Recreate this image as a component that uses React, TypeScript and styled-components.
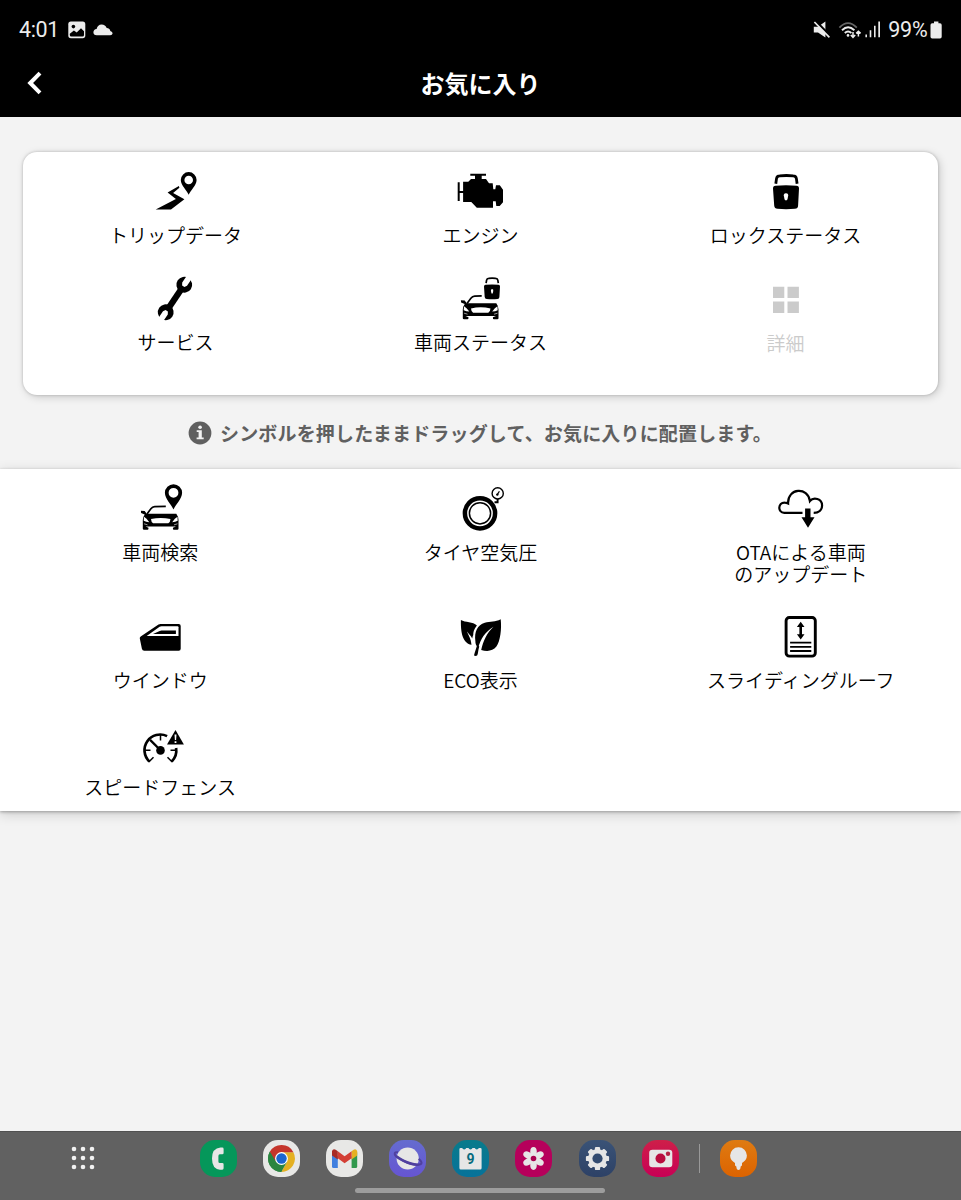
import React from 'react';
import styled, { createGlobalStyle } from 'styled-components';

const GlobalStyle = createGlobalStyle`
  *, *::before, *::after { box-sizing: border-box; }
  body {
    margin: 0;
    background: #f3f3f3;
    font-family: "Noto Sans CJK JP", "Noto Sans", sans-serif;
  }
`;

const Screen = styled.div`
  width: 100%;
  height: 1200px;
  display: flex;
  flex-direction: column;
  background: #f3f3f3;
  overflow: hidden;
`;

const Header = styled.header`
  height: 117px;
  flex: none;
  background: #000;
`;

const StatusBar = styled.div`
  height: 58px;
  padding: 1px 19px 0 19px;
  display: flex;
  align-items: center;
  justify-content: space-between;
  color: #ececec;
  font: 400 21.5px/26px Roboto, sans-serif;
`;

const StatusGroup = styled.div<{ $gap: number }>`
  display: flex;
  align-items: center;
  gap: ${({ $gap }) => $gap}px;
`;

const Clock = styled.span`
  width: 42px;
  padding-top: 1px;
  letter-spacing: -0.4px;
`;

const Percent = styled.span`
  padding-top: 1px;
  letter-spacing: -0.2px;
`;

const TitleBar = styled.div`
  height: 59px;
  padding: 0 23px;
  display: grid;
  grid-template-columns: 24px 1fr 24px;
  align-items: center;
  color: #fff;
`;

const BackButton = styled.button`
  width: 24px;
  height: 28px;
  margin-top: -9px;
  padding: 0;
  border: 0;
  background: none;
  display: flex;
`;

const Title = styled.h1`
  margin: 0;
  padding-bottom: 10px;
  text-align: center;
  font-size: 24px;
  line-height: 32px;
  font-weight: 700;
`;

const TileGrid = styled.section`
  display: grid;
  grid-template-columns: repeat(3, 1fr);
  align-content: start;
  background: #fff;
`;

const FavoritesCard = styled(TileGrid)`
  flex: none;
  height: 243px;
  margin: 35px 23px 0;
  border-radius: 14px;
  box-shadow: 0 0 3px rgba(0, 0, 0, 0.22), 2px 2px 9px rgba(0, 0, 0, 0.17);
`;

const AvailablePanel = styled(TileGrid)`
  flex: none;
  height: 342px;
  box-shadow: 0 1px 3px rgba(0, 0, 0, 0.3), 0 3px 12px rgba(0, 0, 0, 0.16);
`;

const Tile = styled.div<{ $muted?: boolean }>`
  min-height: 107px;
  padding: 13px 0;
  display: flex;
  flex-direction: column;
  align-items: center;
  color: ${({ $muted }) => ($muted ? '#cbcbcb' : '#000')};
`;

const IconFrame = styled.svg`
  width: 53px;
  height: 52px;
  flex: none;
  fill: currentColor;
`;

const TileIcon = ({ children }: { children: React.ReactNode }) => (
  <IconFrame viewBox="-0.5 0 53 52">{children}</IconFrame>
);

const TileLabel = styled.span<{ $muted?: boolean }>`
  margin-top: ${({ $muted }) => ($muted ? 8 : 7)}px;
  font-size: 19px;
  line-height: 22px;
  font-weight: 350;
  text-align: center;
  white-space: pre-line;
`;

const Hint = styled.p`
  flex: none;
  height: 74px;
  margin: 0;
  padding: 1px 0 0 188px;
  display: flex;
  align-items: center;
  gap: 8px;
  color: #606060;
  font-size: 19px;
  line-height: 24px;
  font-weight: 700;
  white-space: nowrap;
  letter-spacing: 0.17px;
`;

const Dock = styled.nav`
  position: relative;
  height: 69px;
  margin-top: auto;
  padding: 8px 0 0 71px;
  display: flex;
  align-items: flex-start;
  background: #616161;
  border-top: 1px solid #515151;
`;

const AppsButton = styled.div`
  width: 24px;
  height: 35px;
  margin-right: 105px;
  display: flex;
  align-items: center;
`;

const AppRow = styled.div`
  display: flex;
  gap: 26.1px;
`;

const AppIcon = styled.div<{ $bg: string }>`
  width: 37px;
  height: 37px;
  border-radius: 15px;
  background: ${({ $bg }) => $bg};

  svg { display: block; }
`;

const Divider = styled.div`
  width: 1.5px;
  height: 29px;
  margin: 4px 20px 0;
  background: #999;
`;

const HomeHandle = styled.div`
  position: absolute;
  left: 355px;
  bottom: 7px;
  width: 250px;
  height: 5px;
  border-radius: 3px;
  background: #9d9d9d;
`;

const Car = ({ y = 0, roof = 27.2 }: { y?: number; roof?: number }) => (
  <g transform={`translate(0 ${y})`}>
    <path
      d={`M12.5 31.5 16.4 26.2Q17.9 24.2 20.2 24.1L${roof} 23.8`}
      fill="none"
      stroke="currentColor"
      strokeWidth="1.7"
    />
    <path d="M6.4 28.2 10.2 28.5 12.2 31.2H41.8Q43.9 33.8 44 37.5V46.2Q44 47.2 42.8 47.2H39.2Q38.2 47.2 38.4 45.2L41.5 43.9H11L14 45.2Q14.2 47.2 13.2 47.2H9.6Q8.3 47.2 8.3 46.2V37.5Q8.3 34.8 10.2 32L6.6 30.4Z" />
    <path
      d="M16.5 36.4Q26.2 34.3 36 36.4 35.8 39.6 33.8 40.7H18.6Q16.7 39.6 16.5 36.4ZM9.5 34.2Q12 35.3 14.8 39.6 11.6 39.5 9.2 38.2ZM43 34.2Q40.4 35.3 37.7 39.6 40.9 39.5 43.2 38.2Z"
      fill="#fff"
    />
    <path d="M9.6 41.2 13 42.2M43 41.2 39.6 42.2" stroke="#fff" strokeWidth=".6" />
  </g>
);

const TripIcon = () => (
  <TileIcon>
    <path d="M6.2 44.5H21.5L34.9 34.3 23.6 28 29.9 22.7 29.4 21 18.1 27.4 26.4 34.1Z" />
    <path
      fillRule="evenodd"
      d="M39.2 29.8C37.6 25.6 31.3 20.4 31.3 15A7.9 7.9 0 0 1 47.1 15C47.1 20.4 40.8 25.6 39.2 29.8ZM39.2 10.7A4.3 4.3 0 1 0 39.2 19.3 4.3 4.3 0 1 0 39.2 10.7Z"
    />
  </TileIcon>
);

const EngineIcon = () => (
  <TileIcon>
    <path d="M3.2 17.3H5.2V26H8.6V16.7H13.8L16.5 14H20.5V10.7H15.8V8.7H31.5V10.7H27.2V14H31.5L34.5 18.3H38.2L38.8 24.3H40.8L41.5 20.3H45.3L48.5 24.8V37.3L45.2 41H41.8L41.2 36.3H38.5V42.8H22.3L16.8 37H8.6V28H5.2V36H3.2Z" />
  </TileIcon>
);

const LockIcon = () => (
  <TileIcon>
    <path
      d="M16.3 18.7 17 13.6Q17.4 10.9 20.1 10.8 26.8 10.2 33.8 10.8 36.5 10.9 36.9 13.6L37.6 18.7"
      fill="none"
      stroke="currentColor"
      strokeWidth="2.8"
    />
    <path d="M16 20.8Q26.5 19.9 37 20.8 39.6 21 39.5 23.6L38.6 40.4Q38.4 43.5 35.4 43.8 26.5 44.6 18 43.8 15 43.5 14.7 40.4L13.5 23.6Q13.4 21 16 20.8Z" />
    <path
      d="M26.5 28.2C28.7 28.2 29.2 30.2 28.5 31.5L28 34.3Q27.7 35.4 26.5 35.4T25 34.3L24.5 31.5C23.8 30.2 24.3 28.2 26.5 28.2Z"
      fill="#fff"
    />
  </TileIcon>
);

const WrenchIcon = () => (
  <TileIcon>
    <g transform="translate(25.5 26.5) rotate(34)">
      <rect x="-3.1" y="-12" width="6.2" height="24" />
      <circle cy="-16.6" r="7.9" />
      <circle cy="16.6" r="7.9" />
      <path
        d="M-2.9-26V-17.2L-1.4-14.8H1.4L2.9-17.2V-26ZM-2.9 26V17.2L-1.4 14.8H1.4L2.9 17.2V26Z"
        fill="#fff"
      />
    </g>
  </TileIcon>
);

const VehicleStatusIcon = () => (
  <TileIcon>
    <Car />
    <path
      d="M31.6 11.2 32.1 8.2Q32.4 6.4 34.2 6.3 37.6 5.9 41.2 6.3 43 6.4 43.3 8.2L43.8 11.2"
      fill="none"
      stroke="currentColor"
      strokeWidth="1.7"
    />
    <path d="M31.1 12.8Q37.5 12.2 44 12.8 45.5 12.9 45.5 14.4L44.9 24.9Q44.8 26.8 43 27 37.5 27.5 32.2 27 30.4 26.8 30.2 24.9L29.5 14.4Q29.5 12.9 31.1 12.8Z" />
    <path d="M37.6 16.9Q39.3 17 38.7 19.2L38.2 21.6H37L36.5 19.2Q35.9 17 37.6 16.9Z" fill="#fff" />
  </TileIcon>
);

const MoreIcon = () => (
  <TileIcon>
    <path d="M13.5 14.7h11.3v11.3H13.5zM28 14.7h11.4v11.3H28zM13.5 29.4h11.3v11.5H13.5zM28 29.4h11.4v11.5H28z" />
  </TileIcon>
);

const FindCarIcon = () => (
  <TileIcon>
    <Car y={0.6} roof={31.3} />
    <path
      fillRule="evenodd"
      d="M39 27.6C37.2 22.8 30.4 17 30.4 10.8A8.6 8.6 0 0 1 47.6 10.8C47.6 17 40.8 22.8 39 27.6ZM39 5.9A4.9 4.9 0 1 0 39 15.7 4.9 4.9 0 1 0 39 5.9Z"
    />
  </TileIcon>
);

const TyreIcon = () => (
  <TileIcon>
    <g fill="none" stroke="currentColor">
      <circle cx="25.5" cy="31.3" r="15.1" strokeWidth="4.5" />
      <circle cx="25.5" cy="31.3" r="10.6" strokeWidth="1.5" />
      <circle cx="43.2" cy="11.4" r="5.6" strokeWidth="1.4" />
      <path d="M43.1 17V20.2H40" strokeWidth="1.9" />
      <path d="M42.6 12.9 44.9 9.2" strokeWidth="1.2" />
    </g>
    <circle cx="42.8" cy="12.6" r="1.2" />
  </TileIcon>
);

const CloudIcon = () => (
  <TileIcon>
    <path
      d="M28 30.8H9.8C2.8 30.6 3.4 20.4 10.2 20.6Q12 20.6 13.6 21.4C13 5.6 33.6 4.8 35.4 19 39 14.6 47.6 16.5 47.6 23.4 47.6 28 44.2 30.8 39.2 30.8"
      fill="none"
      stroke="currentColor"
      strokeWidth="2.2"
    />
    <path d="M30.6 26.6H36V35.2H40L33.5 45.8 27 35.2H30.6Z" />
  </TileIcon>
);

const DoorIcon = () => (
  <TileIcon>
    <path d="M24 14.5Q25 14 26 14H44.2Q46.2 14 46.2 16V38.8Q46.2 40.8 44.2 40.8H9.8Q7.8 40.8 7.4 38.8L5.3 28.6Q5 27.2 6.2 26.4Z" />
    <path d="M12.2 25.9 25.1 16.7Q26 16.2 27 16.2H43Q44 16.2 44 17.2V25.9Z" fill="#fff" />
    <path d="M18.5 24.1 25.2 21Q26 20.6 27 20.6H41.4V24.1Z" />
  </TileIcon>
);

const LeafIcon = () => (
  <TileIcon>
    <path d="M6.4 9.9C10.8 12.6 18.5 11.4 22.4 15.4 19.4 19 18.4 22.4 18.9 25.3L18.5 35C10 34 6 27 6.4 9.9Z" />
    <path d="M12.7 21.4C13.6 25.6 16.4 27 17 35L19.6 35.6 19.4 24Q17.8 26.2 17.7 28.6C16.6 25.6 14.8 24.8 12.7 21.4Z" fill="#fff" />
    <path d="M46.2 9.2C47.3 19 45.8 31 41.9 36.6 38.2 41.7 31.8 41.4 26.7 40 28.6 31.2 32.2 22.8 39 16.7 30.8 21.6 26 29.2 23.8 37.4 21.6 36.2 20.8 33.4 20.9 31.4 19.6 21.5 23 15.2 30.3 12.8 35.7 11.1 40.8 12 46.2 9.2Z" />
    <path d="M22.6 35.2 24.8 36.4C23.6 39.6 23.8 43 22.8 45.3Q21.4 46.4 19.5 45.5C20.4 41.6 21.6 38.6 22.6 35.2Z" />
  </TileIcon>
);

const SlidingRoofIcon = () => (
  <TileIcon>
    <g fill="none" stroke="currentColor">
      <rect x="11.6" y="7.5" width="29.2" height="38.6" rx="3.2" strokeWidth="2.9" />
      <path d="M15.6 32.7H36.8M15.6 36.8H36.8M15.6 41H36.8" strokeWidth="1.8" />
    </g>
    <path d="M26.2 11.8 30 17H27.5V24.2H30L26.2 29.4 22.4 24.2H24.9V17H22.4Z" />
  </TileIcon>
);

const SpeedIcon = () => (
  <TileIcon>
    <g fill="none" stroke="currentColor">
      <path d="M14.8 44.5A15.7 15.7 0 0 1 32.6 19.1M41.6 31A15.7 15.7 0 0 1 37.2 44.5" strokeWidth="2.7" />
      <path d="M26 18V23.5M10.7 33.3H16M36 33.3H41.3M14.3 45 19 40.3M37.7 45 33 40.3" strokeWidth="1.5" />
      <path d="M15.6 22.9 26 33.3" strokeWidth="2.3" />
    </g>
    <circle cx="26" cy="33.4" r="4.3" />
    <path d="M41 13 49.4 27.4H32.5Z" />
    <path d="M40 17.5H42L41.6 23H40.4ZM40.1 24.2H41.9V26H40.1Z" fill="#fff" />
  </TileIcon>
);

type TileData = { label: string; Icon: React.FC; muted?: boolean };

const favorites: TileData[] = [
  { label: 'トリップデータ', Icon: TripIcon },
  { label: 'エンジン', Icon: EngineIcon },
  { label: 'ロックステータス', Icon: LockIcon },
  { label: 'サービス', Icon: WrenchIcon },
  { label: '車両ステータス', Icon: VehicleStatusIcon },
  { label: '詳細', Icon: MoreIcon, muted: true },
];

const available: TileData[] = [
  { label: '車両検索', Icon: FindCarIcon },
  { label: 'タイヤ空気圧', Icon: TyreIcon },
  { label: 'OTAによる車両\nのアップデート', Icon: CloudIcon },
  { label: 'ウインドウ', Icon: DoorIcon },
  { label: 'ECO表示', Icon: LeafIcon },
  { label: 'スライディングルーフ', Icon: SlidingRoofIcon },
  { label: 'スピードフェンス', Icon: SpeedIcon },
];

const renderTile = ({ label, Icon, muted }: TileData) => (
  <Tile key={label} $muted={muted}>
    <Icon />
    <TileLabel $muted={muted}>{label}</TileLabel>
  </Tile>
);

const DockGlyph = ({ children }: { children: React.ReactNode }) => (
  <svg width="37" height="37" viewBox="0 0 37 37" fill="#e6e6e6">
    {children}
  </svg>
);

const gearTeeth = Array.from({ length: 8 }, (_, i) => i * 45);
const petals = [0, 60, 120, 180, 240, 300];

export default function App() {
  return (
    <Screen>
      <GlobalStyle />
      <Header>
        <StatusBar>
          <StatusGroup $gap={7}>
            <Clock>4:01</Clock>
            <svg width="18" height="18" viewBox="0 0 18 18">
              <rect x=".3" y=".6" width="17" height="16.6" rx="2.6" fill="#ececec" />
              <circle cx="5.4" cy="5.6" r="1.8" fill="#000" />
              <path d="M1.8 12.8 5.9 9.5 8.7 11.6 13 7.2 16 10.2V14Q16 15.6 14.4 15.6H3.4Q1.8 15.6 1.8 14Z" fill="#000" />
            </svg>
            <svg width="20" height="12" viewBox="0 0 20 12" fill="#ececec">
              <path d="M3.7 11.2Q.4 11 .4 8.2.6 5.2 3.6 4.9 4.7.5 8.6.4 12.4.5 13.7 3.9 17 4.2 17.3 6.9 19.7 7.5 19.6 9.4 19.3 11.2 17.2 11.2Z" />
            </svg>
          </StatusGroup>
          <StatusGroup $gap={7}>
            <svg width="18" height="18" viewBox="0 0 18 18" fill="#ececec">
              <path d="M.8 5.7H5L12.4.4V16.6L5 11.6H.8Z" />
              <path d="M2.6 0 17.6 15.4" stroke="#000" strokeWidth="2.4" />
              <path d="M1.4 1 16.4 16.4" stroke="#ececec" strokeWidth="1.7" />
            </svg>
            <StatusGroup $gap={3.5}>
              <svg width="24" height="18" viewBox="0 0 24 18" fill="none" stroke="#ececec">
                <path d="M1.4 6.6Q10 -2.4 18.8 6.6" stroke="#666" strokeWidth="1.8" />
                <path d="M4 9.2Q10 3.4 16.4 9.2M6.8 12Q10 9 13.4 12" strokeWidth="1.9" />
                <circle cx="10" cy="14.4" r="1.3" fill="#ececec" stroke="none" />
                <path d="M15 11V16M12.8 14 15 16.3 17.2 14M20.4 15.6V10.4M18.2 12.4 20.4 10.2 22.6 12.4" strokeWidth="1.5" />
              </svg>
              <svg width="16" height="17" viewBox="0 0 16 17" fill="#ececec">
                <path d="M.4 13.6H2V16.2H.4zM4.7 9.2H6.3V16.2H4.7zM9 4.8H10.6V16.2H9zM13.3.6H15V16.2H13.3z" />
              </svg>
            </StatusGroup>
            <StatusGroup $gap={2.5}>
              <Percent>99%</Percent>
              <svg width="12" height="18" viewBox="0 0 12 18" fill="#ececec">
                <path d="M4 .4H8.4V2.2H10Q11.7 2.2 11.7 4V15.8Q11.7 17.4 10 17.4H2.2Q.5 17.4.5 15.8V4Q.5 2.2 2.2 2.2H4Z" />
              </svg>
            </StatusGroup>
          </StatusGroup>
        </StatusBar>
        <TitleBar>
          <BackButton aria-label="戻る">
            <svg width="24" height="28" viewBox="0 0 24 28" fill="none">
              <path d="M17 4.2 7.2 14 17 23.8" stroke="#fff" strokeWidth="4" />
            </svg>
          </BackButton>
          <Title>お気に入り</Title>
        </TitleBar>
      </Header>

      <FavoritesCard>{favorites.map(renderTile)}</FavoritesCard>

      <Hint>
        <svg width="24" height="24" viewBox="0 0 24 24">
          <circle cx="12" cy="12" r="11.4" fill="#606060" />
          <path d="M8.7 9.2H13.8V16.5H15.7V18.2H8.6V16.5H10.6V10.9H8.7Z" fill="#f3f3f3" />
          <circle cx="12.1" cy="6.3" r="1.8" fill="#f3f3f3" />
        </svg>
        シンボルを押したままドラッグして、お気に入りに配置します。
      </Hint>

      <AvailablePanel>{available.map(renderTile)}</AvailablePanel>

      <Dock>
        <AppsButton>
          <svg width="24" height="24" viewBox="0 0 24 24" fill="#f2f2f2">
            {[3, 12, 21].flatMap((y) =>
              [3, 12, 21].map((x) => <circle key={`${x}-${y}`} cx={x} cy={y} r="2.3" />),
            )}
          </svg>
        </AppsButton>
        <AppRow>
          <AppIcon $bg="#05975a">
            <DockGlyph>
              <path d="M20.5 7.6H22.3Q23.6 7.6 23.6 9V13Q23.6 14.3 22.3 14.3H19.8Q18.4 14.4 18.4 16V21.4Q18.4 22.9 19.8 22.9H22.3Q23.6 22.9 23.6 24.3V28.3Q23.6 29.7 22.3 29.7H20Q12 29.2 12 18.6 12 8.2 20.5 7.6Z" />
            </DockGlyph>
          </AppIcon>
          <AppIcon $bg="#e8e8e6">
            <DockGlyph>
              <path d="M18.5 18.5V32A13.5 13.5 0 0 1 6.8 11.8Z" fill="#2b8540" />
              <path d="M18.5 12.2H30.4A13.5 13.5 0 0 1 18.3 32L24.2 21.6Z" fill="#e4b021" />
              <path d="M6.8 11.8A13.5 13.5 0 0 1 30.4 12.2H18.5L12.6 21.6Z" fill="#c5352b" />
              <path d="M6.8 11.8 12.9 21.8Q16 25.5 24 21.8L18.3 32A13.5 13.5 0 0 1 6.8 11.8Z" fill="#2b8540" />
              <circle cx="18.5" cy="18.5" r="6.4" fill="#fff" />
              <circle cx="18.5" cy="18.5" r="5.2" fill="#1d66cf" />
            </DockGlyph>
          </AppIcon>
          <AppIcon $bg="#e8e8e6">
            <DockGlyph>
              <path d="M6 12.2 11.8 16.5V28H7.6Q6 28 6 26.5Z" fill="#4180df" />
              <path d="M31.2 12.2 25.6 16.5V28H29.7Q31.2 28 31.2 26.5Z" fill="#32984d" />
              <path d="M25.6 11.2 27.6 9.7Q30 8.4 31.2 11V15.5L25.6 19.6Z" fill="#e5b022" />
              <path d="M11.8 11.2 18.6 16.3 25.6 11.2V18.2L18.6 23.3 11.8 18.2Z" fill="#d33f35" />
              <path d="M11.8 11.2 9.7 9.7Q7 8.4 6 11V15.5L11.8 19.6Z" fill="#a92a25" />
            </DockGlyph>
          </AppIcon>
          <AppIcon $bg="linear-gradient(#656ccf, #6655d2)">
            <DockGlyph>
              <circle cx="18.7" cy="18.5" r="11.1" />
              <path
                d="M9 12.2C4.4 11.6 4.6 15 9.6 18.4 16.4 22.8 26 25.6 30.6 24.6 33.8 23.6 32.6 21 29.6 18.9"
                fill="none"
                stroke="#50409f"
                strokeWidth="2"
              />
              <path d="M7.2 16.5C13 22.4 22.2 26.3 29 26L31 23.8C24 23.6 14 20.2 7.8 15Z" fill="#50409f" />
            </DockGlyph>
          </AppIcon>
          <AppIcon $bg="linear-gradient(#087b8b, #07729a)">
            <DockGlyph>
              <path d="M7.4 9.3Q7.4 8 8.7 8H10.2A2.1 2 0 0 0 14.2 8H16.5A2.1 2 0 0 0 20.5 8H22.8A2.1 2 0 0 0 26.8 8H28.3Q29.6 8 29.6 9.3V28Q29.6 29.5 28.2 29.5H8.8Q7.4 29.5 7.4 28Z" />
              <text x="18.5" y="23.8" textAnchor="middle" fontFamily="Roboto, sans-serif" fontSize="14" fontWeight="700" fill="#086b7d">
                9
              </text>
            </DockGlyph>
          </AppIcon>
          <AppIcon $bg="#b6005b">
            <DockGlyph>
              {petals.map((angle) => (
                <ellipse key={angle} cx="18.5" cy="11.9" rx="3.3" ry="4.8" transform={`rotate(${angle} 18.5 18.5)`} />
              ))}
              <circle cx="18.5" cy="18.5" r="4.2" />
              <circle cx="18.5" cy="18.5" r="2.8" fill="#a9004e" />
            </DockGlyph>
          </AppIcon>
          <AppIcon $bg="linear-gradient(#3a5377, #2d4166)">
            <DockGlyph>
              {gearTeeth.map((angle) => (
                <rect key={angle} x="15.9" y="6.9" width="5.2" height="6" rx="1.2" transform={`rotate(${angle} 18.5 18.5)`} />
              ))}
              <circle cx="18.5" cy="18.5" r="9.4" />
              <circle cx="18.5" cy="18.5" r="5.1" fill="#334b70" />
            </DockGlyph>
          </AppIcon>
          <AppIcon $bg="linear-gradient(#ce1f49, #c80055)">
            <DockGlyph>
              <rect x="7.2" y="9.8" width="23.1" height="17.4" rx="3.2" />
              <circle cx="18.5" cy="18.5" r="5" fill="#b90d3f" />
              <circle cx="26" cy="13.7" r="2.2" fill="#b52043" />
            </DockGlyph>
          </AppIcon>
        </AppRow>
        <Divider />
        <AppIcon $bg="linear-gradient(#df7b12, #dc6300)">
          <DockGlyph>
            <path d="M18.5 7.2A8.4 8.4 0 0 1 26.9 15.6C26.9 19.2 24.8 21.4 22 22.9V25.2Q21.6 26 20.8 26.3L20.2 29Q18.5 31 16.8 29L16.2 26.3Q15.4 26 15 25.2V22.9C12.2 21.4 10.1 19.2 10.1 15.6A8.4 8.4 0 0 1 18.5 7.2Z" />
          </DockGlyph>
        </AppIcon>
        <HomeHandle />
      </Dock>
    </Screen>
  );
}
